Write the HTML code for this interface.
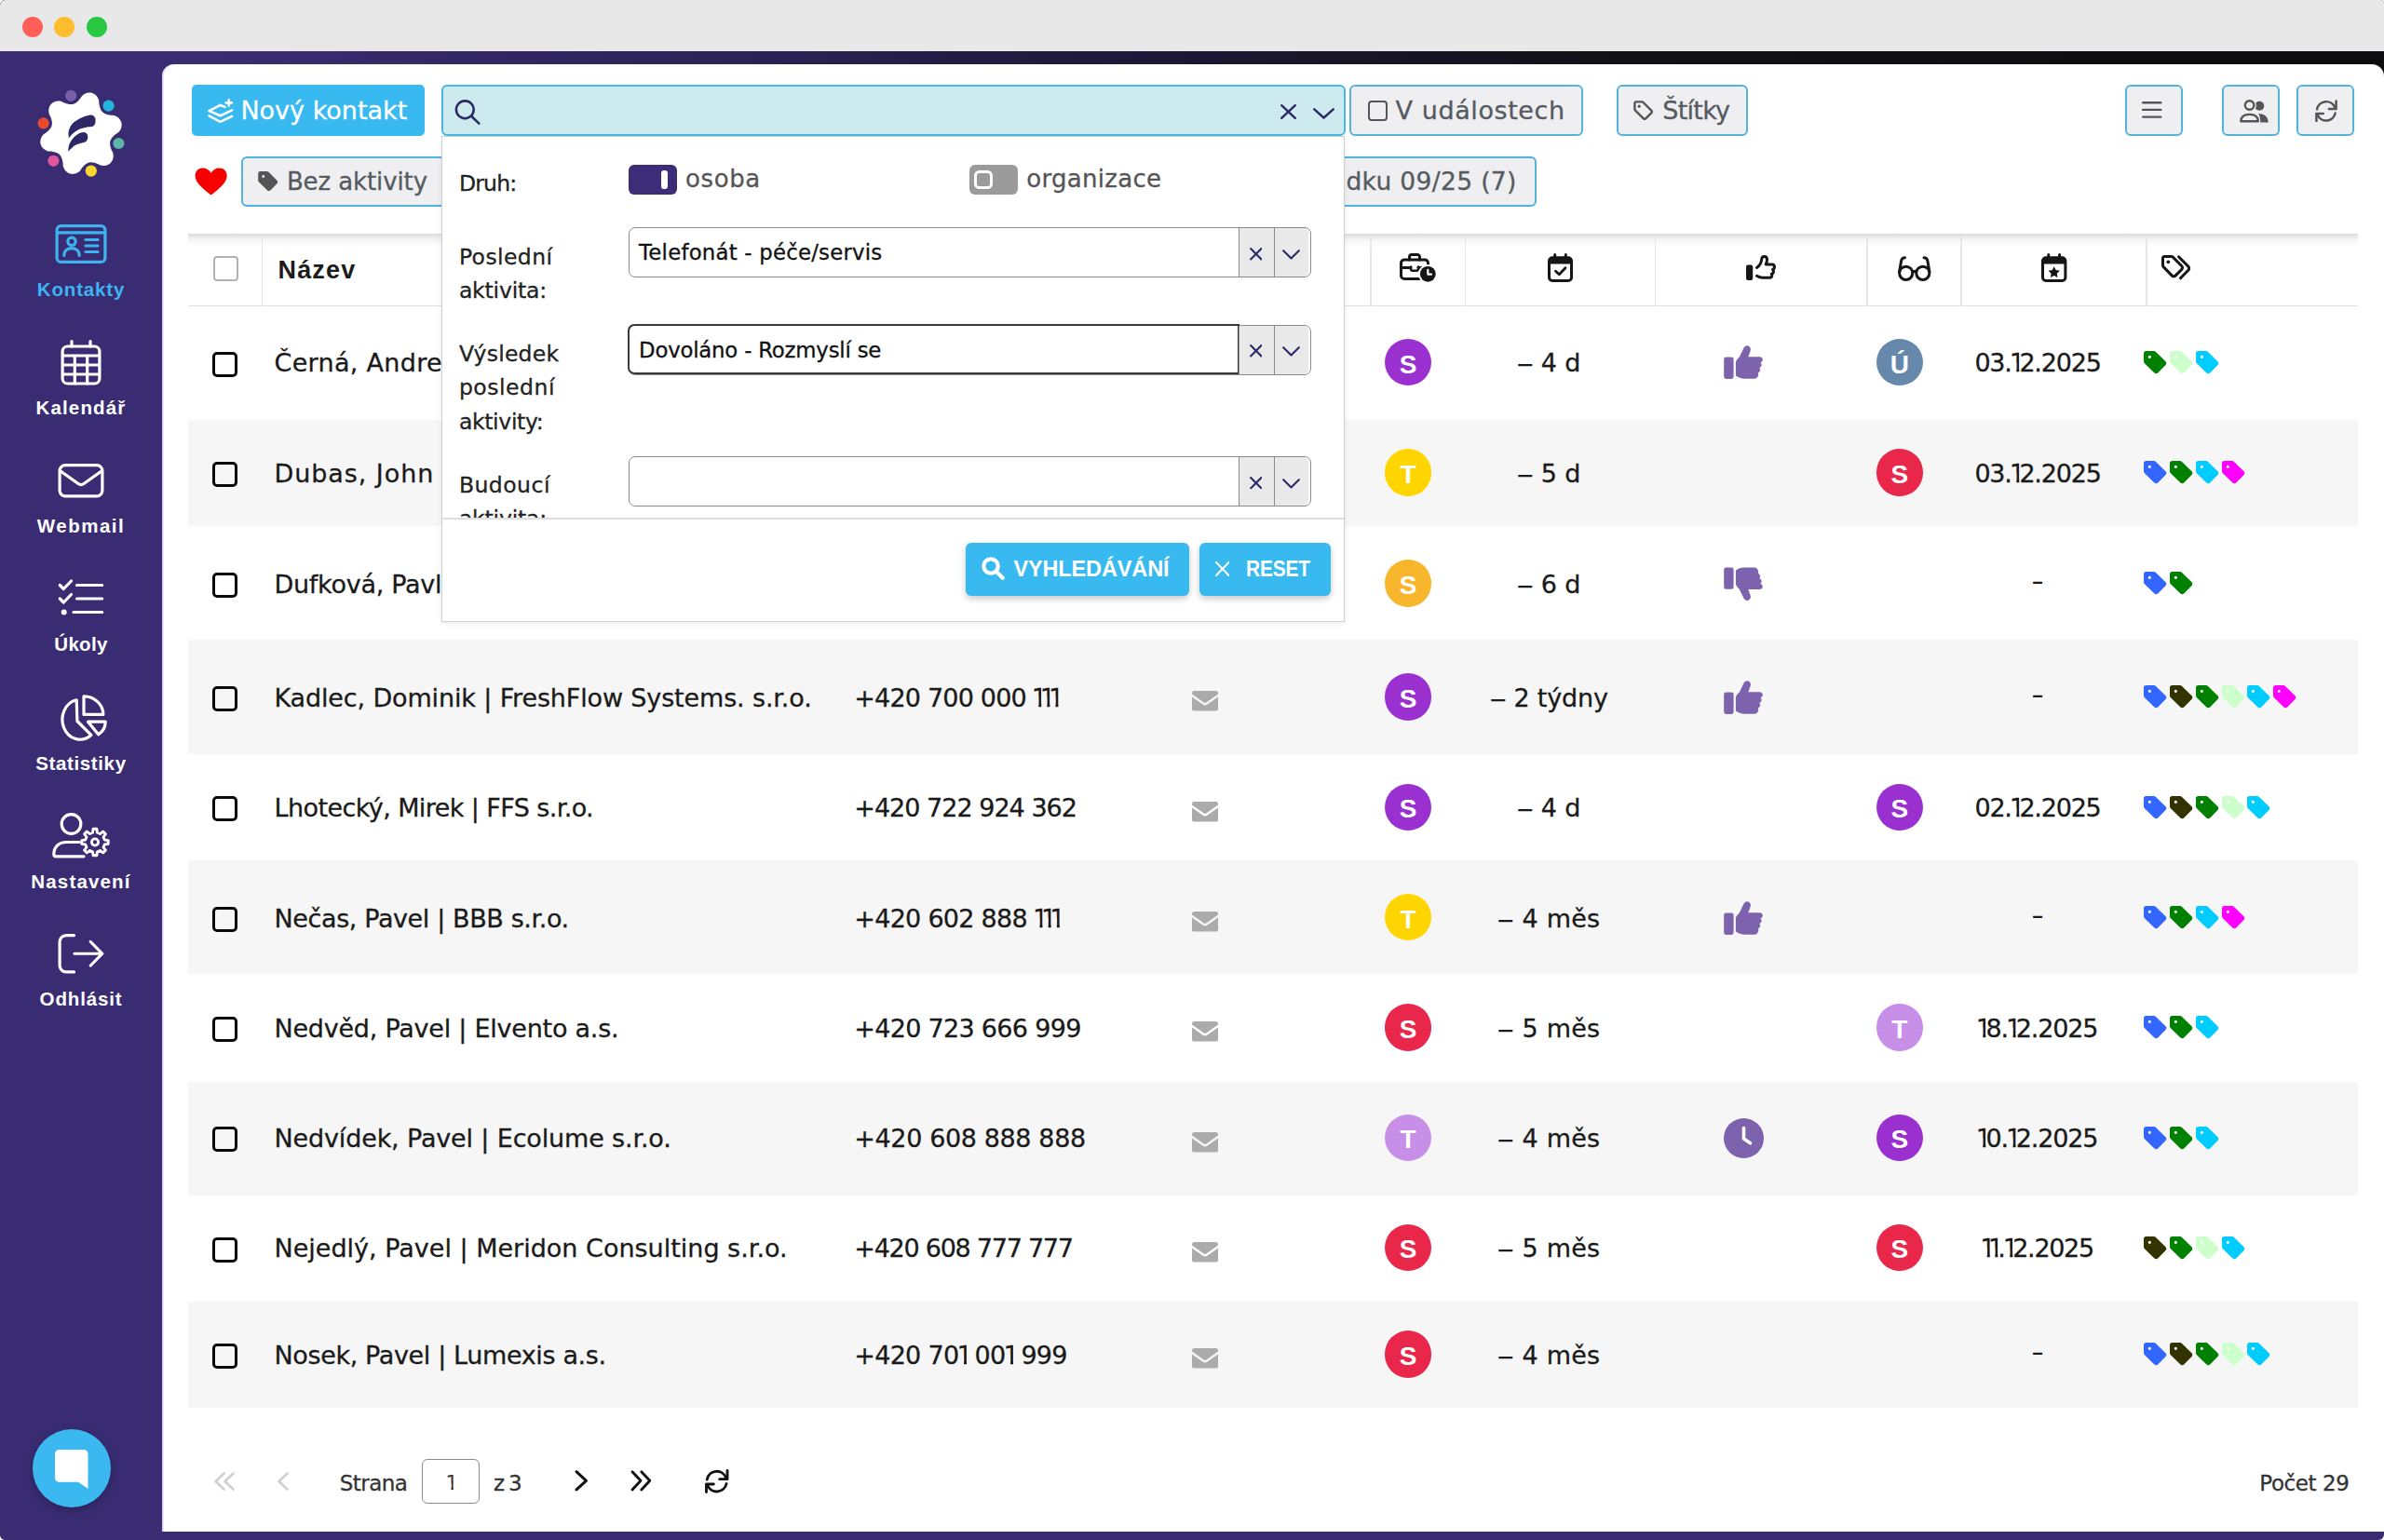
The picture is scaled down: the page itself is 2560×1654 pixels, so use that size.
<!DOCTYPE html>
<html lang="cs"><head><meta charset="utf-8"><title>Kontakty</title>
<style>
*{box-sizing:border-box;margin:0;padding:0}
html,body{width:2560px;height:1654px;overflow:hidden;background:#fff}
body{font-family:"DejaVu Sans","Liberation Sans",sans-serif;color:#1a1a1a;position:relative}
#win{position:absolute;left:0;top:0;width:2560px;height:1654px;border-radius:6px 4px 6px 6px;overflow:hidden;background:#3a2c73}
#titlebar{z-index:5;position:absolute;left:0;top:0;width:2560px;height:55.4px;background:#e8e8e8}
.tl{position:absolute;top:18.4px;width:22px;height:22px;border-radius:50%;display:block}
#strip{position:absolute;left:0;top:55.4px;width:2560px;height:34px;background:linear-gradient(90deg,#3a2c73 0,#3a2c73 9%,#2c2358 30%,#1b1733 50%,#111116 68%,#0d0d0f 100%)}
#sidebar{position:absolute;left:0;top:0;width:174px;height:1654px;background:#3a2c73}
#panel{position:absolute;left:174px;top:69.4px;width:2386px;height:1575.6px;background:#fff;border-radius:13px 13px 0 0;box-shadow:inset 1.6px 0 0 #d9d3f3}
#content{position:absolute;left:0;top:0;width:2560px;height:1654px}
#logo{position:absolute;left:36px;top:93px;width:100px;height:100px}
.nav{position:absolute;left:0;width:174px;height:100px;color:#fff;text-align:center}
.nav svg{position:absolute;left:50%;transform:translateX(-50%);top:0;overflow:visible}
.nav .lbl{position:absolute;left:0;width:174px;top:69.3px;font-family:"Liberation Sans","DejaVu Sans",sans-serif;font-weight:bold;line-height:1;white-space:nowrap}
.nav.active{color:#3db4f0}
#chat{position:absolute;left:34.8px;top:1535.3px;width:83.8px;height:83.8px;border-radius:50%;background:#3bb8f0;box-shadow:0 3px 10px rgba(0,0,0,.25)}
#chat svg{position:absolute;left:24px;top:21.3px}
.ic{position:absolute;line-height:0}
.ic svg{display:block;overflow:visible}
.t{position:absolute;white-space:nowrap;line-height:1;transform:translateY(-50%)}
.btn-primary{position:absolute;background:#38b9ef;border-radius:5px;color:#fff}
.btn-primary.sh{box-shadow:0 3px 7px rgba(0,0,0,.22);border-radius:6px}
.btn-primary svg{position:absolute}
.bt{position:absolute;top:calc(50% - .7px);transform:translateY(-50%);font-size:27px;line-height:1;white-space:nowrap;letter-spacing:-.2px}
.bb{position:absolute;top:50%;transform:translateY(-50%);font-family:"Liberation Sans","DejaVu Sans",sans-serif;font-weight:bold;font-size:23.5px;line-height:1;white-space:nowrap}
#search{position:absolute;left:474.2px;top:90.7px;width:970.4px;height:55.6px;background:#cdeaef;border:2px solid #45b8e6;border-radius:6px}
#search svg{position:absolute}
.chip{position:absolute;background:#efeff1;border:2.1px solid #52b3dc;border-radius:6px;color:#555b61;overflow:hidden}
.chip svg{position:absolute}
.ct{position:absolute;top:calc(50% - .2px);transform:translateY(-50%);font-size:28px;line-height:1;white-space:nowrap}
.sq{position:absolute;left:17.5px;top:15.5px;width:21.5px;height:21.5px;border:2.6px solid #555;border-radius:4px;display:block}
#thead{position:absolute;left:202px;top:251.3px;width:2330px;height:78.1px;border-bottom:1.2px solid #e0e0e0;background:linear-gradient(180deg,#dadada 0,#e6e6e6 2.5px,#f3f3f3 6px,#fbfbfb 10px,#fff 15px)}
.sep{position:absolute;top:253px;width:1.5px;height:76px;background:#e6e6e6}
.hcb{position:absolute;left:228.7px;top:275px;width:27px;height:27px;border:2px solid #b2b2b2;border-radius:4px;background:#fff}
.th{font-family:"Liberation Sans","DejaVu Sans",sans-serif;font-weight:bold;color:#1c1c1c}
.stripe{position:absolute;left:202px;width:2330px;background:#f6f6f6}
.cb{position:absolute;left:227.8px;width:27px;height:27px;border:3px solid #0a0a0a;border-radius:5px}
.name{left:294.5px}
.phone{left:917.3px}
.tm{left:1563.3px;width:200px;text-align:center}
.dt{left:2088px;width:200px;text-align:center}
.ds{transform:translateY(-50%) scaleX(1.4);-webkit-text-stroke:0 !important}
.n1{display:inline-block;clip-path:polygon(0 0,.39em 0,.39em 100%,.28em 100%,.28em 50%,0 50%);margin:0 -.2em 0 -.07em}
.av{position:absolute;width:50.5px;height:50.5px;border-radius:50%;color:#fff;text-align:center}
.av span{position:absolute;left:0;width:100%;top:calc(50% + 2.6px);transform:translateY(-50%);font-family:"Liberation Sans","DejaVu Sans",sans-serif;font-weight:bold;font-size:28px;line-height:1}
.pg{font-size:22.5px;color:#333}
.pgbox{position:absolute;left:452.6px;top:1567.3px;width:62.8px;height:48px;border:1.8px solid #8c8c8c;border-radius:6px;background:#fff}
.pgbox>span{position:absolute;left:0;width:100%;text-align:center;top:calc(50% + 2px);transform:translateY(-50%);font-size:22px;line-height:1;color:#333}
#dd{position:absolute;left:473.9px;top:146px;width:970.3px;height:521.5px;background:#fff;border:1.3px solid #cfcfcf;box-shadow:0 2px 6px rgba(0,0,0,.08)}
.dl{font-size:23.5px;line-height:36.3px;color:#222;transform:none}
.dv{font-size:26px;color:#555}
.tog{position:absolute;width:52px;height:31.4px;border-radius:6px}
.tog i{position:absolute;display:block}
.tog.on{background:#3b2d78}
.tog.on i{left:34.5px;top:5.4px;width:7.6px;height:20.6px;border-radius:3px;background:#fff}
.tog.off{background:#9b9b9b}
.tog.off i{left:5px;top:5.4px;width:20.6px;height:20.6px;border-radius:5.5px;border:3.2px solid #fff}
.sel{position:absolute;left:200.2px;width:732.5px;height:54px;border:1.6px solid #8a8a8a;border-radius:7px;background:#fff}
.sel.foc em{position:absolute;left:-1.6px;top:-1.6px;width:656.5px;height:54px;border:2.2px solid #3a3a3a;border-radius:7px 0 0 7px;display:block}
.sel span{position:absolute;left:10px;top:50%;transform:translateY(-50%);font-size:23.3px;line-height:1;white-space:nowrap;color:#111}
.sel b{position:absolute;top:0;height:100%;background:#e9e9e9;border-left:1.6px solid #8a8a8a;display:block}
.sel .sx{left:653.7px;width:38.2px}
.sel .sc{left:691.9px;width:37.4px;border-radius:0 5.4px 5.4px 0}
.sel b svg{position:absolute}
#ddclip{position:absolute;left:0;top:0;width:100%;height:409.2px;overflow:hidden}
#ddline{position:absolute;left:0;top:409.2px;width:100%;height:1.5px;background:#dedede}
.nd{display:inline-block;transform:scaleX(1.33);margin:0 1.9px}
.name,.phone,.tm,.dt,.dl,.dv,.pg,.ct,.bt,.sel span{-webkit-text-stroke:.3px currentColor}

</style></head>
<body>
<div id="win">
<div id="titlebar"><i class="tl" style="left:23.6px;background:#ff5f57"></i><i class="tl" style="left:58.4px;background:#febc2e"></i><i class="tl" style="left:93.2px;background:#28c840"></i></div>
<div id="strip"></div>
<div id="sidebar">
<div id="logo"><svg width="100" height="100" viewBox="0 0 100 100"><path d="M89.7 50.2L88.1 51.2L87.1 52.1L86.2 53.0L85.3 53.8L84.6 54.6L84.0 55.4L83.5 56.2L83.0 57.0L82.7 57.8L82.4 58.6L82.2 59.4L82.1 60.3L82.1 61.2L82.2 62.2L82.3 63.2L82.6 64.2L82.8 65.4L83.2 66.6L83.7 67.9L84.5 69.5L85.3 71.2L85.6 72.7L85.7 74.1L85.7 75.4L85.5 76.7L85.2 77.9L84.8 79.0L84.2 80.1L83.5 81.1L82.7 81.9L81.9 82.7L80.9 83.4L79.8 84.0L78.7 84.4L77.5 84.7L76.2 84.9L74.9 84.9L73.5 84.8L72.0 84.5L70.4 83.7L68.7 82.9L67.4 82.4L66.2 82.0L65.0 81.8L64.0 81.5L63.0 81.4L62.0 81.3L61.1 81.3L60.2 81.4L59.4 81.6L58.6 81.9L57.8 82.2L57.0 82.7L56.2 83.2L55.4 83.8L54.6 84.5L53.8 85.4L52.9 86.3L52.0 87.3L51.0 88.9L49.9 90.4L48.8 91.4L47.7 92.2L46.5 92.8L45.3 93.3L44.1 93.6L42.9 93.8L41.7 93.9L40.5 93.8L39.4 93.6L38.3 93.2L37.2 92.7L36.2 92.0L35.2 91.3L34.4 90.4L33.6 89.4L32.9 88.2L32.3 87.0L31.8 85.6L31.6 83.7L31.6 81.9L31.3 80.5L31.0 79.3L30.7 78.1L30.4 77.1L30.0 76.2L29.6 75.3L29.1 74.5L28.6 73.8L28.0 73.2L27.4 72.6L26.7 72.1L25.9 71.6L25.0 71.2L24.1 70.8L23.1 70.5L21.9 70.2L20.7 69.9L19.3 69.6L17.5 69.5L15.6 69.4L14.2 68.9L13.0 68.3L11.8 67.6L10.8 66.8L9.9 66.0L9.2 65.0L8.5 64.0L8.0 62.9L7.6 61.8L7.4 60.7L7.3 59.5L7.4 58.3L7.6 57.1L7.9 55.9L8.4 54.7L9.0 53.5L9.8 52.4L10.8 51.3L12.3 50.2L13.9 49.2L14.9 48.3L15.8 47.4L16.7 46.6L17.4 45.8L18.0 45.0L18.5 44.2L19.0 43.4L19.3 42.6L19.6 41.8L19.8 41.0L19.9 40.1L19.9 39.2L19.8 38.2L19.7 37.2L19.4 36.2L19.2 35.0L18.8 33.8L18.3 32.5L17.5 30.9L16.7 29.2L16.4 27.7L16.3 26.3L16.3 25.0L16.5 23.7L16.8 22.5L17.2 21.4L17.8 20.3L18.5 19.3L19.3 18.5L20.1 17.7L21.1 17.0L22.2 16.4L23.3 16.0L24.5 15.7L25.8 15.5L27.1 15.5L28.5 15.6L30.0 15.9L31.7 16.7L33.3 17.5L34.6 18.0L35.8 18.4L37.0 18.6L38.0 18.9L39.0 19.0L40.0 19.1L40.9 19.1L41.8 19.0L42.6 18.8L43.4 18.5L44.2 18.2L45.0 17.7L45.8 17.2L46.6 16.6L47.4 15.9L48.2 15.0L49.1 14.1L50.0 13.1L51.0 11.5L52.1 10.0L53.2 9.0L54.3 8.2L55.5 7.6L56.7 7.1L57.9 6.8L59.1 6.6L60.3 6.5L61.5 6.6L62.6 6.8L63.7 7.2L64.8 7.7L65.8 8.4L66.8 9.1L67.6 10.0L68.4 11.0L69.1 12.2L69.7 13.4L70.2 14.8L70.3 16.7L70.4 18.5L70.7 19.9L71.0 21.1L71.3 22.3L71.6 23.3L72.0 24.2L72.4 25.1L72.9 25.9L73.4 26.6L74.0 27.2L74.6 27.8L75.3 28.3L76.1 28.8L77.0 29.2L77.9 29.6L78.9 29.9L80.1 30.2L81.3 30.5L82.7 30.8L84.5 30.8L86.4 31.0L87.8 31.5L89.0 32.1L90.2 32.8L91.2 33.6L92.1 34.4L92.8 35.4L93.5 36.4L94.0 37.5L94.4 38.6L94.6 39.7L94.7 40.9L94.6 42.1L94.4 43.3L94.1 44.5L93.6 45.7L93.0 46.9L92.2 48.0L91.2 49.1Z" fill="#fff"/><circle cx="40.2" cy="9.8" r="8.6" fill="#3a2c73"/><circle cx="40.2" cy="9.8" r="6.1" fill="#7b5ea8"/><circle cx="80.6" cy="20.6" r="8.6" fill="#3a2c73"/><circle cx="80.6" cy="20.6" r="6.1" fill="#22b4dc"/><circle cx="91.4" cy="61.0" r="8.6" fill="#3a2c73"/><circle cx="91.4" cy="61.0" r="6.1" fill="#5bb5a8"/><circle cx="61.8" cy="90.6" r="8.6" fill="#3a2c73"/><circle cx="61.8" cy="90.6" r="6.1" fill="#f9d72f"/><circle cx="21.4" cy="79.8" r="8.6" fill="#3a2c73"/><circle cx="21.4" cy="79.8" r="6.1" fill="#e0559b"/><circle cx="10.6" cy="39.4" r="8.6" fill="#3a2c73"/><circle cx="10.6" cy="39.4" r="6.1" fill="#e84a2f"/><path d="M37.9 55.5C37.9 54.2 37.1 50.6 37.7 48.0C38.4 45.4 39.6 42.2 41.8 39.8C44.0 37.4 47.8 35.3 50.8 33.8C53.8 32.3 57.5 31.2 59.7 30.8C61.9 30.4 63.1 30.6 64.2 31.2C65.3 31.8 66.1 33.2 66.4 34.6C66.7 36.0 66.6 38.4 66.1 39.8C65.6 41.2 64.9 42.2 63.5 42.8C62.1 43.4 59.9 43.0 57.5 43.5C55.1 44.0 51.8 44.7 49.3 45.8C46.8 46.9 44.4 48.7 42.5 50.3C40.6 51.9 38.7 54.6 37.9 55.5Z" fill="#2d2766"/><path d="M37.2 69.7C37.4 68.6 37.3 65.2 38.1 62.9C38.9 60.6 40.2 58.2 41.8 56.2C43.4 54.2 45.8 52.2 47.8 51.0C49.8 49.8 52.1 49.1 53.7 49.1C55.3 49.1 56.8 49.9 57.5 51.0C58.2 52.1 58.5 54.1 58.2 55.5C58.0 56.9 57.2 58.3 56.0 59.2C54.8 60.1 52.7 60.1 50.8 60.7C48.9 61.3 46.5 61.9 44.8 62.9C43.0 63.9 41.6 65.6 40.3 66.7C39.0 67.8 37.7 69.2 37.2 69.7Z" fill="#2d2766"/></svg></div>
<div class="nav active" style="top:232px"><svg width="55" height="42" viewBox="0 0 55 42" style="top:8.5px"><g fill="none" stroke="currentColor" stroke-width="3.2" stroke-linecap="round" stroke-linejoin="round"><rect x="1.6" y="1.6" width="51.8" height="38.8" rx="4.5"/><path d="M2 8.8H53"/><circle cx="17.5" cy="18.3" r="4.2"/><path d="M9.3 33.5c0-5.2 3.6-7.8 8.2-7.8s8.2 2.6 8.2 7.8"/><path d="M32.5 16.5H45.5M32.5 23H45.5M32.5 29.5H45.5"/></g></svg><div class="lbl" style="font-size:20.5px;letter-spacing:0.85px">Kontakty</div></div>
<div class="nav" style="top:358.3px"><svg width="43" height="48.6" viewBox="0 0 43 48.6" style="top:6.5px"><g fill="none" stroke="currentColor" stroke-width="3.2" stroke-linecap="round" stroke-linejoin="round"><rect x="1.6" y="7" width="39.8" height="40" rx="5.5"/><path d="M11.5 1.6V7M31.5 1.6V7M2 17H41M2 27H41M2 37H41M14.8 17V47M28.2 17V47"/></g></svg><div class="lbl" style="font-size:20.5px;letter-spacing:1.16px">Kalendář</div></div>
<div class="nav" style="top:486px"><svg width="49" height="36.4" viewBox="0 0 49 36.4" style="top:11.9px"><g fill="none" stroke="currentColor" stroke-width="3.2" stroke-linecap="round" stroke-linejoin="round"><rect x="1.6" y="1.6" width="45.8" height="33.2" rx="6"/><path d="M2.5 8L21.5 21.5a5 5 0 0 0 6 0L46.5 8"/></g></svg><div class="lbl" style="font-size:20.5px;letter-spacing:1.51px">Webmail</div></div>
<div class="nav" style="top:612.5px"><svg width="49" height="40" viewBox="0 0 49 40" style="top:9.5px"><g fill="none" stroke="currentColor" stroke-width="3.2" stroke-linecap="round" stroke-linejoin="round"><path d="M1.8 6.5l4 4L14 2M1.8 21l4 4L14 16.5M20 6.5H47.2M20 21H47.2M16.5 35.5H47.2"/></g><circle cx="6.2" cy="35.5" r="3" fill="currentColor"/></svg><div class="lbl" style="font-size:20.5px;letter-spacing:0.33px">Úkoly</div></div>
<div class="nav" style="top:740.5px"><svg width="56" height="49.3" viewBox="0 0 56 49.3" style="top:5px"><g fill="none" stroke="currentColor" stroke-width="3.2" stroke-linecap="round" stroke-linejoin="round"><path d="M23.2 5.8A19 21.4 0 1 0 38.8 43.5L23.9 28.5Z"/><path d="M31 1.9V21.4H51.8A20.8 19.5 0 0 0 31 1.9Z"/><path d="M35.5 29.2H54.2C54.2 35 51 40 46.600 42.800Z"/></g></svg><div class="lbl" style="font-size:20.5px;letter-spacing:0.62px">Statistiky</div></div>
<div class="nav" style="top:867.7px"><svg width="62" height="48.5" viewBox="0 0 62 48.5" style="top:5.8px"><g fill="none" stroke="currentColor" stroke-width="3.2" stroke-linecap="round" stroke-linejoin="round"><circle cx="20.5" cy="12" r="10.3"/><path d="M29 31.5H15.5C7 31.5 1.8 37 1.8 44.5c0 1.5 .8 2.3 2.3 2.3H34"/><path d="M56.3 29.0L60.2 29.6L60.2 33.4L56.3 34.0L55.0 37.0L57.4 40.2L54.7 42.9L51.5 40.5L48.5 41.8L47.9 45.7L44.1 45.7L43.5 41.8L40.5 40.5L37.3 42.9L34.6 40.2L37.0 37.0L35.7 34.0L31.8 33.4L31.8 29.6L35.7 29.0L37.0 26.0L34.6 22.8L37.3 20.1L40.5 22.5L43.5 21.2L44.1 17.3L47.9 17.3L48.5 21.2L51.5 22.5L54.7 20.1L57.4 22.8L55.0 26.0Z" stroke-width="2.9"/><circle cx="46" cy="31.5" r="3.6" stroke-width="2.9"/></g></svg><div class="lbl" style="font-size:20.5px;letter-spacing:1.16px">Nastavení</div></div>
<div class="nav" style="top:994.2px"><svg width="49" height="42.5" viewBox="0 0 49 42.5" style="top:8.8px"><g fill="none" stroke="currentColor" stroke-width="3.2" stroke-linecap="round" stroke-linejoin="round"><path d="M17 1.6H8.6a7 7 0 0 0-7 7V33.9a7 7 0 0 0 7 7H17"/><path d="M17.5 21.25H47M34.8 8.5L47.3 21.25 34.8 34"/></g></svg><div class="lbl" style="font-size:20.5px;letter-spacing:0.85px">Odhlásit</div></div>
<div id="chat"><svg width="36" height="43" viewBox="0 0 36 43"><path d="M4.500 0H31a4.500 4.500 0 0 1 4.500 4.500V42.100L25 34.700H4.500A4.500 4.500 0 0 1 0 30.200V4.500A4.500 4.500 0 0 1 4.500 0Z" fill="#fff"/></svg></div>
</div>
<div id="panel">
</div>
<div id="content">
<!-- toolbar row 1 -->
<div class="btn-primary" style="left:205.5px;top:90.7px;width:250.5px;height:55.3px"><svg width="28" height="27" viewBox="0 0 28 27" style="left:17.5px;top:15.3px"><g fill="none" stroke="#fff" stroke-width="2.6" stroke-linecap="round" stroke-linejoin="round"><path d="M18.5 8.9L13.5 6.8 1.5 13.1l12 5.2 12.6-6"/><path d="M1.5 18.3l12 6.5 12.6-6"/><path d="M22.8 1.3v6.2M19.7 4.4h6.2"/></g></svg><span class="bt" style="left:52.9px;font-size:27px;letter-spacing:-0.00px">Nový kontakt</span></div>
<div id="search"><svg width="28" height="27" viewBox="0 0 28 27" style="left:11.8px;top:14.3px"><g fill="none" stroke="#2b2966" stroke-width="2.6" stroke-linecap="round"><circle cx="11.3" cy="10.8" r="9.4"/><path d="M18.2 17.7L26.3 25.6"/></g></svg><svg width="17" height="16" viewBox="0 0 17 16" style="left:898.6px;top:19.8px"><path d="M1.2 1.2L15.8 14.8M15.8 1.2L1.2 14.8" fill="none" stroke="#2b2966" stroke-width="2.4" stroke-linecap="round"/></svg><svg width="23" height="12" viewBox="0 0 23 12" style="left:933.5px;top:23.1px"><path d="M1.3 1.3L11.5 10.5 21.7 1.3" fill="none" stroke="#2b2966" stroke-width="2.4" stroke-linecap="round" stroke-linejoin="round"/></svg></div>
<div class="chip" style="left:1449.4px;top:90.7px;width:250.8px;height:55.3px"><i class="sq"></i><span class="ct" style="left:47.2px;top:calc(50% - .5px);font-size:27px;letter-spacing:0.58px">V událostech</span></div>
<div class="chip" style="left:1735.5px;top:90.7px;width:141.8px;height:55.3px"><svg width="21" height="21" viewBox="0 0 21 21" style="left:16.5px;top:15.8px"><path d="M1.4 2.6A1.2 1.2 0 0 1 2.6 1.4H9.2a2 2 0 0 1 1.4.6l8.6 8.6a2 2 0 0 1 0 2.8l-5.8 5.8a2 2 0 0 1-2.8 0L2 10.6a2 2 0 0 1-.6-1.4Z" fill="none" stroke="#555" stroke-width="2.4" stroke-linejoin="round"/><circle cx="6.2" cy="6.2" r="1.6" fill="#555"/></svg><span class="ct" style="left:47.8px;top:calc(50% - .5px);font-size:27px;letter-spacing:-0.74px">Štítky</span></div>
<div class="chip" style="left:2281.6px;top:90.7px;width:62px;height:55.3px"><svg width="21.5" height="18" viewBox="0 0 21.5 18" style="left:16.8px;top:16.8px"><path d="M1.2 1.2H20.3M1.2 8.9H20.3M1.2 16.6H20.3" stroke="#555" stroke-width="2.4" stroke-linecap="round" fill="none"/></svg></div>
<div class="chip" style="left:2386px;top:90.7px;width:62.3px;height:55.3px"><svg width="33" height="27" viewBox="0 0 33 27" style="left:16.400px;top:13.200px"><path d="M21.200 16.100C27.500 16.100 31.700 19.600 31.700 25.500H22.800C23 21.500 22.800 18.600 21.200 16.100Z" fill="#555"/><circle cx="22.300" cy="7.700" r="5" fill="#555"/><circle cx="11.600" cy="7" r="7.300" fill="#efeff1"/><path d="M2.400 24.300C2.400 19.300 6 16.900 11.600 16.900S20.800 19.300 20.800 24.300Z" fill="#efeff1" stroke="#efeff1" stroke-width="5" stroke-linejoin="round"/><circle cx="11.600" cy="7" r="4.800" fill="none" stroke="#555" stroke-width="2.400"/><path d="M2.400 24.300C2.400 19.300 6 16.900 11.600 16.900S20.800 19.300 20.800 24.300Z" fill="none" stroke="#555" stroke-width="2.400" stroke-linejoin="round"/></svg></div>
<div class="chip" style="left:2466.2px;top:90.7px;width:62px;height:55.3px"><svg width="24" height="24.4" viewBox="0 0 24 24.4" style="left:17.500px;top:13.900px"><g fill="none" stroke="#555" stroke-width="2.5" stroke-linecap="round" stroke-linejoin="round"><path d="M2.100 10.400A10 10 0 0 1 21.300 8.600"/><path d="M21.700 14.600A10 10 0 0 1 2.700 16.400"/><path d="M22.600 1.400V10H14.800"/><path d="M1.400 23.100V15H8.800"/></g></svg></div>
<!-- toolbar row 2 -->
<div class="ic" style="left:208.5px;top:180px"><svg width="35.3" height="30" viewBox="0 0 35.3 30"><path d="M17.65 29.6C11 24 1 17.5 .6 9.3.4 4 4.2.6 8.9.6c3.6 0 6.9 2 8.75 5.2C19.5 2.6 22.8.6 26.4.6c4.7 0 8.5 3.4 8.3 8.7-.4 8.2-10.4 14.7-17.05 20.3Z" fill="#f70000"/></svg></div>
<div class="chip" style="left:259px;top:167.6px;width:260px;height:54.8px"><svg width="21.4" height="21" viewBox="0 0 24 24" style="left:16.200px;top:14.800px"><path d="M0 2.600A2.600 2.600 0 0 1 2.600 0H10.800a3 3 0 0 1 2.100.900L23.100 11a3 3 0 0 1 0 4.200L15.300 23.100a3 3 0 0 1-4.200 0L.900 13.100A3 3 0 0 1 0 11ZM6.300 7.900a1.600 1.600 0 1 0 0-3.200 1.600 1.600 0 0 0 0 3.200Z" fill="#555" fill-rule="evenodd"/></svg><span class="ct" style="left:46.9px;font-size:26px;letter-spacing:-0.11px">Bez aktivity</span></div>
<div class="chip" style="left:1100px;top:167.6px;width:550px;height:54.8px"><span class="ct" style="right:19.3px;font-size:27.5px"><span style="margin-right:7px">řá</span><span style="font-size:26.5px;letter-spacing:0.34px">dku 09/25 (7)</span></span></div>
<!-- table -->
<div id="thead"></div>
<div class="sep" style="left:280.55px"></div><div class="sep" style="left:1471.45px"></div><div class="sep" style="left:1572.65px"></div><div class="sep" style="left:1776.85px"></div><div class="sep" style="left:2004.45px"></div><div class="sep" style="left:2105.45px"></div><div class="sep" style="left:2304.15px"></div>
<div class="hcb"></div>
<div class="t th" style="left:298.5px;top:289.5px;font-size:27px;letter-spacing:1.17px">Název</div>
<div class="ic" style="left:1503px;top:272px"><svg width="39" height="31" viewBox="0 0 39 31"><g fill="none" stroke="#161616" stroke-width="3" stroke-linecap="round" stroke-linejoin="round"><path d="M24 27.5H5a3.5 3.5 0 0 1-3.5-3.5V10.5A3.5 3.5 0 0 1 5 7H27a3.5 3.5 0 0 1 3.5 3.5V14"/><path d="M10.5 7V4a2.5 2.5 0 0 1 2.5-2.5h6A2.5 2.5 0 0 1 21.500 4V7"/><path d="M1.8 15.5H12M20 15.5H24"/><path d="M12 14.5v2.3a2 2 0 0 0 2 2h4a2 2 0 0 0 2-2V14.500" stroke-width="2.4"/></g><circle cx="30.3" cy="22.3" r="10.400" fill="#fff"/><circle cx="30.3" cy="22.3" r="8.400" fill="#161616"/><path d="M30.3 17.8V22.6H34" fill="none" stroke="#fff" stroke-width="2.2" stroke-linecap="round" stroke-linejoin="round"/></svg></div>
<div class="ic" style="left:1662px;top:272px"><svg width="27" height="31" viewBox="0 0 27 31"><g fill="none" stroke="#161616" stroke-width="3" stroke-linecap="round" stroke-linejoin="round"><rect x="1.5" y="4.8" width="24" height="24.7" rx="3.5"/><path d="M7.700 1.500V6M19.300 1.500V6"/><path d="M8.500 19.200l3.800 3.600 6.700-7" stroke-width="2.8"/></g><path d="M1.500 8.500A3.700 3.700 0 0 1 5.200 4.800H21.800A3.700 3.700 0 0 1 25.500 8.500V11.500H1.500Z" fill="#161616"/></svg></div>
<div class="ic" style="left:1875px;top:274px"><svg width="32" height="27.5" viewBox="0 0 32 27.5"><rect x="0" y="10.5" width="7.2" height="16.5" rx="2" fill="#161616"/><g fill="none" stroke="#161616" stroke-width="3" stroke-linecap="round" stroke-linejoin="round"><path d="M11.500 13.500c3.200-2.200 5-5.500 5.300-9.300.1-1.600 1.200-2.700 2.700-2.700 1.800 0 3 1.400 3 3.300 0 1.800-.5 3.600-1.300 5.200h6.300c1.700 0 3 1.200 3 2.800 0 1.300-.8 2.300-2 2.700.7.500 1 1.300 1 2.100 0 1.300-.9 2.400-2.200 2.600.3.400.5 1 .5 1.500 0 1.500-1.200 2.600-2.700 2.600H18c-2.500 0-4.500-.7-6.500-2"/></g></svg></div>
<div class="ic" style="left:2038px;top:274.5px"><svg width="35.5" height="27" viewBox="0 0 35.5 27"><g fill="none" stroke="#161616" stroke-width="3" stroke-linecap="round" stroke-linejoin="round"><path d="M7.500 1.700C5 1.700 4 3 3.600 5.200L1.600 17"/><path d="M28 1.700c2.500 0 3.500 1.300 3.900 3.500L33.900 17"/><circle cx="8.700" cy="18.300" r="7.100"/><circle cx="26.800" cy="18.300" r="7.100"/><path d="M15.800 16.500h3.900"/></g></svg></div>
<div class="ic" style="left:2192px;top:272px"><svg width="27.4" height="31" viewBox="0 0 27.4 31"><g fill="none" stroke="#161616" stroke-width="3" stroke-linecap="round" stroke-linejoin="round"><rect x="1.5" y="4.8" width="24.4" height="24.7" rx="3.5"/><path d="M7.800 1.500V6M19.600 1.500V6"/></g><path d="M1.500 8.500A3.700 3.700 0 0 1 5.200 4.800H22.200A3.700 3.700 0 0 1 25.900 8.500V11.500H1.500Z" fill="#161616"/><path d="M13.700 14.200l1.900 3.900 4.300.6-3.100 3 .7 4.300-3.800-2-3.800 2 .7-4.300-3.100-3 4.300-.6Z" fill="#161616"/></svg></div>
<div class="ic" style="left:2321px;top:273.5px"><svg width="32" height="27.5" viewBox="0 0 32 27.5"><g fill="none" stroke="#161616" stroke-width="3" stroke-linecap="round" stroke-linejoin="round" stroke-width="2.800"><path d="M1.500 3A1.500 1.500 0 0 1 3 1.500H10.500a2.500 2.500 0 0 1 1.800.7l9.500 9.500a2.500 2.500 0 0 1 0 3.600l-6.800 6.800a2.500 2.500 0 0 1-3.600 0L2.200 12.600a2.500 2.500 0 0 1-.7-1.800Z"/><path d="M18.500 1.800l10.300 10.300a3 3 0 0 1 0 4.200L20.500 24.800"/></g><circle cx="7.300" cy="7.300" r="1.900" fill="#161616"/></svg></div>
<div class="cb" style="top:377.7px"></div>
<div class="t name" style="top:389.4px;font-size:27px;letter-spacing:0.31px">Černá, Andrea</div>
<div class="av" style="left:1486.8px;top:363.8px;background:#9b30d0"><span>S</span></div>
<div class="t tm" style="top:389.4px;font-size:27px;letter-spacing:-0.15px"><span class="nd">–</span> 4 d</div>
<div class="ic" style="left:1850.7px;top:371.4px"><svg width="42.2" height="36.3" viewBox="0 0 42.2 36.3"><g fill="#7d62ae"><rect x=".2" y="12.5" width="10.4" height="23.4" rx="2.3"/><path d="M12.9 18.8C12.9 16.200 14.600 14.700 16.800 12.600L21 3.700C22 1.200 24.300 -.200 26.300 .500C28.700 1.300 29.400 3.800 28.600 6L26.300 12.300H38.500C40.800 12.300 41.900 14 41.800 15.400C41.700 17 40.600 18.200 39.100 18.400C40.300 19 40.700 20.200 40.600 21.300C40.400 22.800 39.400 23.800 38.100 24C39 24.600 39.300 25.700 39.100 26.700C38.800 28.100 37.900 29 36.700 29.200C37.300 29.900 37.400 30.800 37.200 31.700C36.700 34.200 35 35.800 32.500 35.800H23C18.500 35.800 15.500 34.600 12.900 32.600Z"/></g></svg></div>
<div class="av" style="left:2014.6px;top:363.8px;background:#6688aa"><span>Ú</span></div>
<div class="t dt" style="top:389.4px;font-size:27px;letter-spacing:-1.21px">03.<span class="n1">1</span>2.2025</div>
<div class="ic" style="left:2301.9px;top:376.8px"><svg width="24.2" height="24.2" viewBox="0 0 24 24"><path d="M0 2.600A2.600 2.600 0 0 1 2.600 0H10.800a3 3 0 0 1 2.100.900L23.100 11a3 3 0 0 1 0 4.200L15.300 23.100a3 3 0 0 1-4.200 0L.900 13.100A3 3 0 0 1 0 11ZM6.300 7.900a1.600 1.600 0 1 0 0-3.200 1.600 1.600 0 0 0 0 3.200Z" fill="#008000" fill-rule="evenodd"/></svg></div>
<div class="ic" style="left:2329.8px;top:376.8px"><svg width="24.2" height="24.2" viewBox="0 0 24 24"><path d="M0 2.600A2.600 2.600 0 0 1 2.600 0H10.800a3 3 0 0 1 2.100.900L23.100 11a3 3 0 0 1 0 4.200L15.300 23.100a3 3 0 0 1-4.200 0L.900 13.100A3 3 0 0 1 0 11ZM6.300 7.900a1.600 1.600 0 1 0 0-3.200 1.600 1.600 0 0 0 0 3.200Z" fill="#ccffcc" fill-rule="evenodd"/></svg></div>
<div class="ic" style="left:2357.6px;top:376.8px"><svg width="24.2" height="24.2" viewBox="0 0 24 24"><path d="M0 2.600A2.600 2.600 0 0 1 2.600 0H10.800a3 3 0 0 1 2.100.900L23.100 11a3 3 0 0 1 0 4.200L15.300 23.100a3 3 0 0 1-4.200 0L.900 13.100A3 3 0 0 1 0 11ZM6.300 7.900a1.600 1.600 0 1 0 0-3.200 1.600 1.600 0 0 0 0 3.200Z" fill="#00ccff" fill-rule="evenodd"/></svg></div>
<div class="stripe" style="top:451.2px;height:113.9px"></div>
<div class="cb" style="top:496.0px"></div>
<div class="t name" style="top:507.7px;font-size:27px;letter-spacing:0.93px">Dubas, John</div>
<div class="av" style="left:1486.8px;top:482.1px;background:#ffd500"><span>T</span></div>
<div class="t tm" style="top:507.7px;font-size:27px;letter-spacing:-0.15px"><span class="nd">–</span> 5 d</div>
<div class="av" style="left:2014.6px;top:482.1px;background:#e8274b"><span>S</span></div>
<div class="t dt" style="top:507.7px;font-size:27px;letter-spacing:-1.21px">03.<span class="n1">1</span>2.2025</div>
<div class="ic" style="left:2301.9px;top:495.1px"><svg width="24.2" height="24.2" viewBox="0 0 24 24"><path d="M0 2.600A2.600 2.600 0 0 1 2.600 0H10.800a3 3 0 0 1 2.100.900L23.100 11a3 3 0 0 1 0 4.200L15.300 23.100a3 3 0 0 1-4.200 0L.900 13.100A3 3 0 0 1 0 11ZM6.300 7.900a1.600 1.600 0 1 0 0-3.200 1.600 1.600 0 0 0 0 3.200Z" fill="#3366ff" fill-rule="evenodd"/></svg></div>
<div class="ic" style="left:2329.8px;top:495.1px"><svg width="24.2" height="24.2" viewBox="0 0 24 24"><path d="M0 2.600A2.600 2.600 0 0 1 2.600 0H10.800a3 3 0 0 1 2.100.900L23.100 11a3 3 0 0 1 0 4.200L15.300 23.100a3 3 0 0 1-4.200 0L.900 13.100A3 3 0 0 1 0 11ZM6.300 7.900a1.600 1.600 0 1 0 0-3.200 1.600 1.600 0 0 0 0 3.200Z" fill="#008000" fill-rule="evenodd"/></svg></div>
<div class="ic" style="left:2357.6px;top:495.1px"><svg width="24.2" height="24.2" viewBox="0 0 24 24"><path d="M0 2.600A2.600 2.600 0 0 1 2.600 0H10.800a3 3 0 0 1 2.100.900L23.100 11a3 3 0 0 1 0 4.200L15.300 23.100a3 3 0 0 1-4.200 0L.900 13.100A3 3 0 0 1 0 11ZM6.300 7.900a1.600 1.600 0 1 0 0-3.200 1.600 1.600 0 0 0 0 3.200Z" fill="#00ccff" fill-rule="evenodd"/></svg></div>
<div class="ic" style="left:2385.5px;top:495.1px"><svg width="24.2" height="24.2" viewBox="0 0 24 24"><path d="M0 2.600A2.600 2.600 0 0 1 2.600 0H10.800a3 3 0 0 1 2.100.900L23.100 11a3 3 0 0 1 0 4.200L15.300 23.100a3 3 0 0 1-4.200 0L.900 13.100A3 3 0 0 1 0 11ZM6.300 7.900a1.600 1.600 0 1 0 0-3.200 1.600 1.600 0 0 0 0 3.200Z" fill="#ff00ff" fill-rule="evenodd"/></svg></div>
<div class="cb" style="top:615.1px"></div>
<div class="t name" style="top:626.8px;font-size:27px;letter-spacing:-0.28px">Dufková, Pavla</div>
<div class="av" style="left:1486.8px;top:601.2px;background:#f8b62d"><span>S</span></div>
<div class="t tm" style="top:626.8px;font-size:27px;letter-spacing:-0.15px"><span class="nd">–</span> 6 d</div>
<div class="ic" style="left:1850.7px;top:608.8px"><svg width="42.2" height="36.3" viewBox="0 0 42.2 36.3"><g fill="#7d62ae" transform="translate(0 36.300) scale(1 -1)"><rect x=".2" y="12.5" width="10.4" height="23.4" rx="2.3"/><path d="M12.9 18.8C12.9 16.200 14.600 14.700 16.800 12.600L21 3.700C22 1.200 24.300 -.200 26.300 .500C28.700 1.300 29.400 3.800 28.600 6L26.300 12.300H38.500C40.800 12.300 41.900 14 41.800 15.400C41.700 17 40.600 18.200 39.100 18.400C40.300 19 40.700 20.200 40.600 21.300C40.400 22.800 39.400 23.800 38.100 24C39 24.600 39.300 25.700 39.100 26.700C38.800 28.100 37.900 29 36.700 29.200C37.300 29.900 37.400 30.800 37.200 31.700C36.700 34.200 35 35.800 32.500 35.800H23C18.500 35.800 15.500 34.600 12.900 32.600Z"/></g></svg></div>
<div class="t dt ds" style="top:623.4px;font-size:27px">-</div>
<div class="ic" style="left:2301.9px;top:614.2px"><svg width="24.2" height="24.2" viewBox="0 0 24 24"><path d="M0 2.600A2.600 2.600 0 0 1 2.600 0H10.800a3 3 0 0 1 2.100.900L23.100 11a3 3 0 0 1 0 4.200L15.300 23.100a3 3 0 0 1-4.200 0L.900 13.100A3 3 0 0 1 0 11ZM6.300 7.900a1.600 1.600 0 1 0 0-3.200 1.600 1.600 0 0 0 0 3.200Z" fill="#3366ff" fill-rule="evenodd"/></svg></div>
<div class="ic" style="left:2329.8px;top:614.2px"><svg width="24.2" height="24.2" viewBox="0 0 24 24"><path d="M0 2.600A2.600 2.600 0 0 1 2.600 0H10.800a3 3 0 0 1 2.100.900L23.100 11a3 3 0 0 1 0 4.200L15.300 23.100a3 3 0 0 1-4.200 0L.900 13.100A3 3 0 0 1 0 11ZM6.300 7.900a1.600 1.600 0 1 0 0-3.200 1.600 1.600 0 0 0 0 3.200Z" fill="#008000" fill-rule="evenodd"/></svg></div>
<div class="stripe" style="top:686.9px;height:123.3px"></div>
<div class="cb" style="top:736.9px"></div>
<div class="t name" style="top:748.6px;font-size:27px;letter-spacing:-0.14px">Kadlec, Dominik | FreshFlow Systems. s.r.o.</div>
<div class="t phone" style="top:748.6px;font-size:27px;letter-spacing:-0.82px">+420 700 000 <span class="n1">1</span><span class="n1">1</span><span class="n1">1</span></div>
<div class="ic" style="left:1280px;top:742.0px"><svg width="28" height="21.6" viewBox="0 0 28 21.6"><path d="M2.600 0H25.400A2.600 2.600 0 0 1 28 2.600V3.400L15.300 12.600a2.200 2.200 0 0 1-2.600 0L0 3.400V2.600A2.600 2.600 0 0 1 2.600 0ZM0 6.400V19A2.600 2.600 0 0 0 2.600 21.600H25.400A2.600 2.600 0 0 0 28 19V6.400L16.600 14.600a4.400 4.400 0 0 1-5.200 0Z" fill="#ababab"/></svg></div>
<div class="av" style="left:1486.8px;top:723.0px;background:#9b30d0"><span>S</span></div>
<div class="t tm" style="top:748.6px;font-size:27px;letter-spacing:-0.17px"><span class="nd">–</span> 2 týdny</div>
<div class="ic" style="left:1850.7px;top:730.6px"><svg width="42.2" height="36.3" viewBox="0 0 42.2 36.3"><g fill="#7d62ae"><rect x=".2" y="12.5" width="10.4" height="23.4" rx="2.3"/><path d="M12.9 18.8C12.9 16.200 14.600 14.700 16.800 12.600L21 3.700C22 1.200 24.300 -.200 26.300 .500C28.700 1.300 29.400 3.800 28.600 6L26.300 12.300H38.500C40.800 12.300 41.900 14 41.800 15.400C41.700 17 40.600 18.200 39.100 18.400C40.300 19 40.700 20.200 40.600 21.300C40.400 22.800 39.400 23.800 38.100 24C39 24.600 39.300 25.700 39.100 26.700C38.800 28.100 37.900 29 36.700 29.200C37.300 29.900 37.400 30.800 37.200 31.700C36.700 34.200 35 35.800 32.500 35.800H23C18.500 35.800 15.500 34.600 12.900 32.600Z"/></g></svg></div>
<div class="t dt ds" style="top:745.2px;font-size:27px">-</div>
<div class="ic" style="left:2301.9px;top:736.0px"><svg width="24.2" height="24.2" viewBox="0 0 24 24"><path d="M0 2.600A2.600 2.600 0 0 1 2.600 0H10.800a3 3 0 0 1 2.100.900L23.100 11a3 3 0 0 1 0 4.200L15.300 23.100a3 3 0 0 1-4.200 0L.900 13.100A3 3 0 0 1 0 11ZM6.300 7.900a1.600 1.600 0 1 0 0-3.200 1.600 1.600 0 0 0 0 3.200Z" fill="#3366ff" fill-rule="evenodd"/></svg></div>
<div class="ic" style="left:2329.8px;top:736.0px"><svg width="24.2" height="24.2" viewBox="0 0 24 24"><path d="M0 2.600A2.600 2.600 0 0 1 2.600 0H10.800a3 3 0 0 1 2.100.900L23.100 11a3 3 0 0 1 0 4.200L15.300 23.100a3 3 0 0 1-4.200 0L.900 13.100A3 3 0 0 1 0 11ZM6.300 7.900a1.600 1.600 0 1 0 0-3.200 1.600 1.600 0 0 0 0 3.200Z" fill="#333300" fill-rule="evenodd"/></svg></div>
<div class="ic" style="left:2357.6px;top:736.0px"><svg width="24.2" height="24.2" viewBox="0 0 24 24"><path d="M0 2.600A2.600 2.600 0 0 1 2.600 0H10.800a3 3 0 0 1 2.100.900L23.100 11a3 3 0 0 1 0 4.200L15.300 23.100a3 3 0 0 1-4.200 0L.900 13.100A3 3 0 0 1 0 11ZM6.300 7.900a1.600 1.600 0 1 0 0-3.200 1.600 1.600 0 0 0 0 3.200Z" fill="#008000" fill-rule="evenodd"/></svg></div>
<div class="ic" style="left:2385.5px;top:736.0px"><svg width="24.2" height="24.2" viewBox="0 0 24 24"><path d="M0 2.600A2.600 2.600 0 0 1 2.600 0H10.800a3 3 0 0 1 2.100.900L23.100 11a3 3 0 0 1 0 4.200L15.300 23.100a3 3 0 0 1-4.200 0L.900 13.100A3 3 0 0 1 0 11ZM6.300 7.900a1.600 1.600 0 1 0 0-3.200 1.600 1.600 0 0 0 0 3.200Z" fill="#ccffcc" fill-rule="evenodd"/></svg></div>
<div class="ic" style="left:2413.3px;top:736.0px"><svg width="24.2" height="24.2" viewBox="0 0 24 24"><path d="M0 2.600A2.600 2.600 0 0 1 2.600 0H10.800a3 3 0 0 1 2.100.900L23.100 11a3 3 0 0 1 0 4.200L15.300 23.100a3 3 0 0 1-4.200 0L.900 13.100A3 3 0 0 1 0 11ZM6.300 7.900a1.600 1.600 0 1 0 0-3.200 1.600 1.600 0 0 0 0 3.200Z" fill="#00ccff" fill-rule="evenodd"/></svg></div>
<div class="ic" style="left:2441.2px;top:736.0px"><svg width="24.2" height="24.2" viewBox="0 0 24 24"><path d="M0 2.600A2.600 2.600 0 0 1 2.600 0H10.800a3 3 0 0 1 2.100.900L23.100 11a3 3 0 0 1 0 4.200L15.300 23.100a3 3 0 0 1-4.200 0L.900 13.100A3 3 0 0 1 0 11ZM6.300 7.900a1.600 1.600 0 1 0 0-3.200 1.600 1.600 0 0 0 0 3.200Z" fill="#ff00ff" fill-rule="evenodd"/></svg></div>
<div class="cb" style="top:855.4px"></div>
<div class="t name" style="top:867.1px;font-size:27px;letter-spacing:-0.59px">Lhotecký, Mirek | FFS s.r.o.</div>
<div class="t phone" style="top:867.1px;font-size:27px;letter-spacing:-0.99px">+420 722 924 362</div>
<div class="ic" style="left:1280px;top:860.5px"><svg width="28" height="21.6" viewBox="0 0 28 21.6"><path d="M2.600 0H25.400A2.600 2.600 0 0 1 28 2.600V3.400L15.300 12.600a2.200 2.200 0 0 1-2.600 0L0 3.400V2.600A2.600 2.600 0 0 1 2.600 0ZM0 6.400V19A2.600 2.600 0 0 0 2.600 21.600H25.400A2.600 2.600 0 0 0 28 19V6.400L16.600 14.600a4.400 4.400 0 0 1-5.200 0Z" fill="#ababab"/></svg></div>
<div class="av" style="left:1486.8px;top:841.5px;background:#9b30d0"><span>S</span></div>
<div class="t tm" style="top:867.1px;font-size:27px;letter-spacing:-0.15px"><span class="nd">–</span> 4 d</div>
<div class="av" style="left:2014.6px;top:841.5px;background:#9b30d0"><span>S</span></div>
<div class="t dt" style="top:867.1px;font-size:27px;letter-spacing:-1.22px">02.<span class="n1">1</span>2.2025</div>
<div class="ic" style="left:2301.9px;top:854.5px"><svg width="24.2" height="24.2" viewBox="0 0 24 24"><path d="M0 2.600A2.600 2.600 0 0 1 2.600 0H10.800a3 3 0 0 1 2.100.900L23.100 11a3 3 0 0 1 0 4.200L15.300 23.100a3 3 0 0 1-4.200 0L.900 13.100A3 3 0 0 1 0 11ZM6.300 7.900a1.600 1.600 0 1 0 0-3.200 1.600 1.600 0 0 0 0 3.200Z" fill="#3366ff" fill-rule="evenodd"/></svg></div>
<div class="ic" style="left:2329.8px;top:854.5px"><svg width="24.2" height="24.2" viewBox="0 0 24 24"><path d="M0 2.600A2.600 2.600 0 0 1 2.600 0H10.800a3 3 0 0 1 2.100.900L23.100 11a3 3 0 0 1 0 4.200L15.300 23.100a3 3 0 0 1-4.200 0L.900 13.100A3 3 0 0 1 0 11ZM6.300 7.900a1.600 1.600 0 1 0 0-3.200 1.600 1.600 0 0 0 0 3.200Z" fill="#333300" fill-rule="evenodd"/></svg></div>
<div class="ic" style="left:2357.6px;top:854.5px"><svg width="24.2" height="24.2" viewBox="0 0 24 24"><path d="M0 2.600A2.600 2.600 0 0 1 2.600 0H10.800a3 3 0 0 1 2.100.900L23.100 11a3 3 0 0 1 0 4.200L15.300 23.100a3 3 0 0 1-4.200 0L.900 13.100A3 3 0 0 1 0 11ZM6.300 7.900a1.600 1.600 0 1 0 0-3.200 1.600 1.600 0 0 0 0 3.200Z" fill="#008000" fill-rule="evenodd"/></svg></div>
<div class="ic" style="left:2385.5px;top:854.5px"><svg width="24.2" height="24.2" viewBox="0 0 24 24"><path d="M0 2.600A2.600 2.600 0 0 1 2.600 0H10.800a3 3 0 0 1 2.100.900L23.100 11a3 3 0 0 1 0 4.200L15.300 23.100a3 3 0 0 1-4.200 0L.900 13.100A3 3 0 0 1 0 11ZM6.300 7.900a1.600 1.600 0 1 0 0-3.200 1.600 1.600 0 0 0 0 3.200Z" fill="#ccffcc" fill-rule="evenodd"/></svg></div>
<div class="ic" style="left:2413.3px;top:854.5px"><svg width="24.2" height="24.2" viewBox="0 0 24 24"><path d="M0 2.600A2.600 2.600 0 0 1 2.600 0H10.800a3 3 0 0 1 2.100.900L23.100 11a3 3 0 0 1 0 4.200L15.300 23.100a3 3 0 0 1-4.200 0L.900 13.100A3 3 0 0 1 0 11ZM6.300 7.900a1.600 1.600 0 1 0 0-3.200 1.600 1.600 0 0 0 0 3.200Z" fill="#00ccff" fill-rule="evenodd"/></svg></div>
<div class="stripe" style="top:923.8px;height:122.1px"></div>
<div class="cb" style="top:973.8px"></div>
<div class="t name" style="top:985.5px;font-size:27px;letter-spacing:-0.39px">Nečas, Pavel | BBB s.r.o.</div>
<div class="t phone" style="top:985.5px;font-size:27px;letter-spacing:-0.73px">+420 602 888 <span class="n1">1</span><span class="n1">1</span><span class="n1">1</span></div>
<div class="ic" style="left:1280px;top:978.9px"><svg width="28" height="21.6" viewBox="0 0 28 21.6"><path d="M2.600 0H25.400A2.600 2.600 0 0 1 28 2.600V3.400L15.300 12.600a2.200 2.200 0 0 1-2.600 0L0 3.400V2.600A2.600 2.600 0 0 1 2.600 0ZM0 6.400V19A2.600 2.600 0 0 0 2.600 21.600H25.400A2.600 2.600 0 0 0 28 19V6.400L16.600 14.600a4.400 4.400 0 0 1-5.200 0Z" fill="#ababab"/></svg></div>
<div class="av" style="left:1486.8px;top:959.9px;background:#ffd500"><span>T</span></div>
<div class="t tm" style="top:985.5px;font-size:27px;letter-spacing:0.17px"><span class="nd">–</span> 4 měs</div>
<div class="ic" style="left:1850.7px;top:967.5px"><svg width="42.2" height="36.3" viewBox="0 0 42.2 36.3"><g fill="#7d62ae"><rect x=".2" y="12.5" width="10.4" height="23.4" rx="2.3"/><path d="M12.9 18.8C12.9 16.200 14.600 14.700 16.800 12.600L21 3.700C22 1.200 24.300 -.200 26.300 .500C28.700 1.300 29.400 3.800 28.600 6L26.300 12.300H38.500C40.800 12.300 41.900 14 41.800 15.400C41.700 17 40.600 18.200 39.100 18.400C40.300 19 40.700 20.200 40.600 21.300C40.400 22.800 39.400 23.800 38.100 24C39 24.600 39.300 25.700 39.100 26.700C38.800 28.100 37.900 29 36.700 29.200C37.300 29.900 37.400 30.800 37.200 31.700C36.700 34.200 35 35.800 32.500 35.800H23C18.500 35.800 15.500 34.600 12.900 32.600Z"/></g></svg></div>
<div class="t dt ds" style="top:982.1px;font-size:27px">-</div>
<div class="ic" style="left:2301.9px;top:972.9px"><svg width="24.2" height="24.2" viewBox="0 0 24 24"><path d="M0 2.600A2.600 2.600 0 0 1 2.600 0H10.800a3 3 0 0 1 2.100.900L23.100 11a3 3 0 0 1 0 4.200L15.300 23.100a3 3 0 0 1-4.200 0L.900 13.100A3 3 0 0 1 0 11ZM6.300 7.900a1.600 1.600 0 1 0 0-3.200 1.600 1.600 0 0 0 0 3.200Z" fill="#3366ff" fill-rule="evenodd"/></svg></div>
<div class="ic" style="left:2329.8px;top:972.9px"><svg width="24.2" height="24.2" viewBox="0 0 24 24"><path d="M0 2.600A2.600 2.600 0 0 1 2.600 0H10.800a3 3 0 0 1 2.100.900L23.100 11a3 3 0 0 1 0 4.200L15.300 23.100a3 3 0 0 1-4.200 0L.900 13.100A3 3 0 0 1 0 11ZM6.300 7.900a1.600 1.600 0 1 0 0-3.200 1.600 1.600 0 0 0 0 3.200Z" fill="#008000" fill-rule="evenodd"/></svg></div>
<div class="ic" style="left:2357.6px;top:972.9px"><svg width="24.2" height="24.2" viewBox="0 0 24 24"><path d="M0 2.600A2.600 2.600 0 0 1 2.600 0H10.800a3 3 0 0 1 2.100.900L23.100 11a3 3 0 0 1 0 4.200L15.300 23.100a3 3 0 0 1-4.200 0L.900 13.100A3 3 0 0 1 0 11ZM6.300 7.900a1.600 1.600 0 1 0 0-3.200 1.600 1.600 0 0 0 0 3.200Z" fill="#00ccff" fill-rule="evenodd"/></svg></div>
<div class="ic" style="left:2385.5px;top:972.9px"><svg width="24.2" height="24.2" viewBox="0 0 24 24"><path d="M0 2.600A2.600 2.600 0 0 1 2.600 0H10.800a3 3 0 0 1 2.100.900L23.100 11a3 3 0 0 1 0 4.200L15.300 23.100a3 3 0 0 1-4.200 0L.900 13.100A3 3 0 0 1 0 11ZM6.300 7.900a1.600 1.600 0 1 0 0-3.200 1.600 1.600 0 0 0 0 3.200Z" fill="#ff00ff" fill-rule="evenodd"/></svg></div>
<div class="cb" style="top:1091.9px"></div>
<div class="t name" style="top:1103.6px;font-size:27px;letter-spacing:-0.24px">Nedvěd, Pavel | Elvento a.s.</div>
<div class="t phone" style="top:1103.6px;font-size:27px;letter-spacing:-0.70px">+420 723 666 999</div>
<div class="ic" style="left:1280px;top:1097.0px"><svg width="28" height="21.6" viewBox="0 0 28 21.6"><path d="M2.600 0H25.400A2.600 2.600 0 0 1 28 2.600V3.400L15.300 12.600a2.200 2.200 0 0 1-2.600 0L0 3.400V2.600A2.600 2.600 0 0 1 2.600 0ZM0 6.400V19A2.600 2.600 0 0 0 2.600 21.600H25.400A2.600 2.600 0 0 0 28 19V6.400L16.600 14.600a4.400 4.400 0 0 1-5.200 0Z" fill="#ababab"/></svg></div>
<div class="av" style="left:1486.8px;top:1078.0px;background:#e8274b"><span>S</span></div>
<div class="t tm" style="top:1103.6px;font-size:27px;letter-spacing:0.17px"><span class="nd">–</span> 5 měs</div>
<div class="av" style="left:2014.6px;top:1078.0px;background:#c88fe8"><span>T</span></div>
<div class="t dt" style="top:1103.6px;font-size:27px;letter-spacing:-1.14px"><span class="n1">1</span>8.<span class="n1">1</span>2.2025</div>
<div class="ic" style="left:2301.9px;top:1091.0px"><svg width="24.2" height="24.2" viewBox="0 0 24 24"><path d="M0 2.600A2.600 2.600 0 0 1 2.600 0H10.800a3 3 0 0 1 2.100.900L23.100 11a3 3 0 0 1 0 4.200L15.300 23.100a3 3 0 0 1-4.200 0L.900 13.100A3 3 0 0 1 0 11ZM6.300 7.900a1.600 1.600 0 1 0 0-3.200 1.600 1.600 0 0 0 0 3.200Z" fill="#3366ff" fill-rule="evenodd"/></svg></div>
<div class="ic" style="left:2329.8px;top:1091.0px"><svg width="24.2" height="24.2" viewBox="0 0 24 24"><path d="M0 2.600A2.600 2.600 0 0 1 2.600 0H10.800a3 3 0 0 1 2.100.900L23.100 11a3 3 0 0 1 0 4.200L15.300 23.100a3 3 0 0 1-4.200 0L.900 13.100A3 3 0 0 1 0 11ZM6.300 7.900a1.600 1.600 0 1 0 0-3.200 1.600 1.600 0 0 0 0 3.200Z" fill="#008000" fill-rule="evenodd"/></svg></div>
<div class="ic" style="left:2357.6px;top:1091.0px"><svg width="24.2" height="24.2" viewBox="0 0 24 24"><path d="M0 2.600A2.600 2.600 0 0 1 2.600 0H10.800a3 3 0 0 1 2.100.900L23.100 11a3 3 0 0 1 0 4.200L15.300 23.100a3 3 0 0 1-4.200 0L.900 13.100A3 3 0 0 1 0 11ZM6.300 7.900a1.600 1.600 0 1 0 0-3.200 1.600 1.600 0 0 0 0 3.200Z" fill="#00ccff" fill-rule="evenodd"/></svg></div>
<div class="stripe" style="top:1162.1px;height:121.5px"></div>
<div class="cb" style="top:1210.4px"></div>
<div class="t name" style="top:1222.1px;font-size:27px;letter-spacing:-0.15px">Nedvídek, Pavel | Ecolume s.r.o.</div>
<div class="t phone" style="top:1222.1px;font-size:27px;letter-spacing:-0.38px">+420 608 888 888</div>
<div class="ic" style="left:1280px;top:1215.5px"><svg width="28" height="21.6" viewBox="0 0 28 21.6"><path d="M2.600 0H25.400A2.600 2.600 0 0 1 28 2.600V3.400L15.300 12.600a2.200 2.200 0 0 1-2.600 0L0 3.400V2.600A2.600 2.600 0 0 1 2.600 0ZM0 6.400V19A2.600 2.600 0 0 0 2.600 21.600H25.400A2.600 2.600 0 0 0 28 19V6.400L16.600 14.600a4.400 4.400 0 0 1-5.200 0Z" fill="#ababab"/></svg></div>
<div class="av" style="left:1486.8px;top:1196.5px;background:#c88fe8"><span>T</span></div>
<div class="t tm" style="top:1222.1px;font-size:27px;letter-spacing:0.17px"><span class="nd">–</span> 4 měs</div>
<div class="ic" style="left:1850.7px;top:1201.0px"><svg width="43" height="43" viewBox="0 0 43 43"><circle cx="21.500" cy="21.500" r="21.500" fill="#7d62ae"/><path d="M21.500 10.500V22l7 4.700" fill="none" stroke="#fff" stroke-width="3.600" stroke-linecap="round" stroke-linejoin="round"/></svg></div>
<div class="av" style="left:2014.6px;top:1196.5px;background:#9b30d0"><span>S</span></div>
<div class="t dt" style="top:1222.1px;font-size:27px;letter-spacing:-1.14px"><span class="n1">1</span>0.<span class="n1">1</span>2.2025</div>
<div class="ic" style="left:2301.9px;top:1209.5px"><svg width="24.2" height="24.2" viewBox="0 0 24 24"><path d="M0 2.600A2.600 2.600 0 0 1 2.600 0H10.800a3 3 0 0 1 2.100.900L23.100 11a3 3 0 0 1 0 4.200L15.300 23.100a3 3 0 0 1-4.200 0L.900 13.100A3 3 0 0 1 0 11ZM6.300 7.900a1.600 1.600 0 1 0 0-3.200 1.600 1.600 0 0 0 0 3.200Z" fill="#3366ff" fill-rule="evenodd"/></svg></div>
<div class="ic" style="left:2329.8px;top:1209.5px"><svg width="24.2" height="24.2" viewBox="0 0 24 24"><path d="M0 2.600A2.600 2.600 0 0 1 2.600 0H10.800a3 3 0 0 1 2.100.900L23.100 11a3 3 0 0 1 0 4.200L15.300 23.100a3 3 0 0 1-4.200 0L.900 13.100A3 3 0 0 1 0 11ZM6.300 7.900a1.600 1.600 0 1 0 0-3.200 1.600 1.600 0 0 0 0 3.200Z" fill="#008000" fill-rule="evenodd"/></svg></div>
<div class="ic" style="left:2357.6px;top:1209.5px"><svg width="24.2" height="24.2" viewBox="0 0 24 24"><path d="M0 2.600A2.600 2.600 0 0 1 2.600 0H10.800a3 3 0 0 1 2.100.900L23.100 11a3 3 0 0 1 0 4.200L15.300 23.100a3 3 0 0 1-4.200 0L.900 13.100A3 3 0 0 1 0 11ZM6.300 7.900a1.600 1.600 0 1 0 0-3.200 1.600 1.600 0 0 0 0 3.200Z" fill="#00ccff" fill-rule="evenodd"/></svg></div>
<div class="cb" style="top:1328.5px"></div>
<div class="t name" style="top:1340.2px;font-size:27px;letter-spacing:-0.00px">Nejedlý, Pavel | Meridon Consulting s.r.o.</div>
<div class="t phone" style="top:1340.2px;font-size:27px;letter-spacing:-1.26px">+420 608 777 777</div>
<div class="ic" style="left:1280px;top:1333.6px"><svg width="28" height="21.6" viewBox="0 0 28 21.6"><path d="M2.600 0H25.400A2.600 2.600 0 0 1 28 2.600V3.400L15.300 12.600a2.200 2.200 0 0 1-2.600 0L0 3.400V2.600A2.600 2.600 0 0 1 2.600 0ZM0 6.400V19A2.600 2.600 0 0 0 2.600 21.600H25.400A2.600 2.600 0 0 0 28 19V6.400L16.600 14.600a4.400 4.400 0 0 1-5.200 0Z" fill="#ababab"/></svg></div>
<div class="av" style="left:1486.8px;top:1314.6px;background:#e8274b"><span>S</span></div>
<div class="t tm" style="top:1340.2px;font-size:27px;letter-spacing:0.17px"><span class="nd">–</span> 5 měs</div>
<div class="av" style="left:2014.6px;top:1314.6px;background:#e8274b"><span>S</span></div>
<div class="t dt" style="top:1340.2px;font-size:27px;letter-spacing:-1.31px"><span class="n1">1</span><span class="n1">1</span>.<span class="n1">1</span>2.2025</div>
<div class="ic" style="left:2301.9px;top:1327.6px"><svg width="24.2" height="24.2" viewBox="0 0 24 24"><path d="M0 2.600A2.600 2.600 0 0 1 2.600 0H10.800a3 3 0 0 1 2.100.900L23.100 11a3 3 0 0 1 0 4.200L15.300 23.100a3 3 0 0 1-4.200 0L.900 13.100A3 3 0 0 1 0 11ZM6.300 7.900a1.600 1.600 0 1 0 0-3.200 1.600 1.600 0 0 0 0 3.200Z" fill="#333300" fill-rule="evenodd"/></svg></div>
<div class="ic" style="left:2329.8px;top:1327.6px"><svg width="24.2" height="24.2" viewBox="0 0 24 24"><path d="M0 2.600A2.600 2.600 0 0 1 2.600 0H10.800a3 3 0 0 1 2.100.900L23.100 11a3 3 0 0 1 0 4.200L15.300 23.100a3 3 0 0 1-4.200 0L.900 13.100A3 3 0 0 1 0 11ZM6.300 7.900a1.600 1.600 0 1 0 0-3.200 1.600 1.600 0 0 0 0 3.200Z" fill="#008000" fill-rule="evenodd"/></svg></div>
<div class="ic" style="left:2357.6px;top:1327.6px"><svg width="24.2" height="24.2" viewBox="0 0 24 24"><path d="M0 2.600A2.600 2.600 0 0 1 2.600 0H10.800a3 3 0 0 1 2.100.900L23.100 11a3 3 0 0 1 0 4.200L15.300 23.100a3 3 0 0 1-4.200 0L.900 13.100A3 3 0 0 1 0 11ZM6.300 7.900a1.600 1.600 0 1 0 0-3.200 1.600 1.600 0 0 0 0 3.200Z" fill="#ccffcc" fill-rule="evenodd"/></svg></div>
<div class="ic" style="left:2385.5px;top:1327.6px"><svg width="24.2" height="24.2" viewBox="0 0 24 24"><path d="M0 2.600A2.600 2.600 0 0 1 2.600 0H10.800a3 3 0 0 1 2.100.900L23.100 11a3 3 0 0 1 0 4.200L15.300 23.100a3 3 0 0 1-4.200 0L.900 13.100A3 3 0 0 1 0 11ZM6.300 7.900a1.600 1.600 0 1 0 0-3.200 1.600 1.600 0 0 0 0 3.200Z" fill="#00ccff" fill-rule="evenodd"/></svg></div>
<div class="stripe" style="top:1397.7px;height:114.3px"></div>
<div class="cb" style="top:1442.9px"></div>
<div class="t name" style="top:1454.6px;font-size:27px;letter-spacing:-0.37px">Nosek, Pavel | Lumexis a.s.</div>
<div class="t phone" style="top:1454.6px;font-size:27px;letter-spacing:-0.72px">+420 70<span class="n1">1</span> 00<span class="n1">1</span> 999</div>
<div class="ic" style="left:1280px;top:1448.0px"><svg width="28" height="21.6" viewBox="0 0 28 21.6"><path d="M2.600 0H25.400A2.600 2.600 0 0 1 28 2.600V3.400L15.300 12.600a2.200 2.200 0 0 1-2.600 0L0 3.400V2.600A2.600 2.600 0 0 1 2.600 0ZM0 6.400V19A2.600 2.600 0 0 0 2.600 21.600H25.400A2.600 2.600 0 0 0 28 19V6.400L16.600 14.600a4.400 4.400 0 0 1-5.200 0Z" fill="#ababab"/></svg></div>
<div class="av" style="left:1486.8px;top:1429.0px;background:#e8274b"><span>S</span></div>
<div class="t tm" style="top:1454.6px;font-size:27px;letter-spacing:0.17px"><span class="nd">–</span> 4 měs</div>
<div class="t dt ds" style="top:1451.2px;font-size:27px">-</div>
<div class="ic" style="left:2301.9px;top:1442.0px"><svg width="24.2" height="24.2" viewBox="0 0 24 24"><path d="M0 2.600A2.600 2.600 0 0 1 2.600 0H10.800a3 3 0 0 1 2.100.900L23.100 11a3 3 0 0 1 0 4.200L15.300 23.100a3 3 0 0 1-4.200 0L.900 13.100A3 3 0 0 1 0 11ZM6.300 7.900a1.600 1.600 0 1 0 0-3.200 1.600 1.600 0 0 0 0 3.200Z" fill="#3366ff" fill-rule="evenodd"/></svg></div>
<div class="ic" style="left:2329.8px;top:1442.0px"><svg width="24.2" height="24.2" viewBox="0 0 24 24"><path d="M0 2.600A2.600 2.600 0 0 1 2.600 0H10.800a3 3 0 0 1 2.100.900L23.100 11a3 3 0 0 1 0 4.200L15.300 23.100a3 3 0 0 1-4.200 0L.900 13.100A3 3 0 0 1 0 11ZM6.300 7.900a1.600 1.600 0 1 0 0-3.200 1.600 1.600 0 0 0 0 3.200Z" fill="#333300" fill-rule="evenodd"/></svg></div>
<div class="ic" style="left:2357.6px;top:1442.0px"><svg width="24.2" height="24.2" viewBox="0 0 24 24"><path d="M0 2.600A2.600 2.600 0 0 1 2.600 0H10.800a3 3 0 0 1 2.100.900L23.100 11a3 3 0 0 1 0 4.200L15.300 23.100a3 3 0 0 1-4.200 0L.900 13.100A3 3 0 0 1 0 11ZM6.300 7.900a1.600 1.600 0 1 0 0-3.200 1.600 1.600 0 0 0 0 3.200Z" fill="#008000" fill-rule="evenodd"/></svg></div>
<div class="ic" style="left:2385.5px;top:1442.0px"><svg width="24.2" height="24.2" viewBox="0 0 24 24"><path d="M0 2.600A2.600 2.600 0 0 1 2.600 0H10.800a3 3 0 0 1 2.100.900L23.100 11a3 3 0 0 1 0 4.200L15.300 23.100a3 3 0 0 1-4.200 0L.900 13.100A3 3 0 0 1 0 11ZM6.300 7.900a1.600 1.600 0 1 0 0-3.200 1.600 1.600 0 0 0 0 3.200Z" fill="#ccffcc" fill-rule="evenodd"/></svg></div>
<div class="ic" style="left:2413.3px;top:1442.0px"><svg width="24.2" height="24.2" viewBox="0 0 24 24"><path d="M0 2.600A2.600 2.600 0 0 1 2.600 0H10.800a3 3 0 0 1 2.100.900L23.100 11a3 3 0 0 1 0 4.200L15.300 23.100a3 3 0 0 1-4.200 0L.900 13.100A3 3 0 0 1 0 11ZM6.300 7.900a1.600 1.600 0 1 0 0-3.200 1.600 1.600 0 0 0 0 3.200Z" fill="#00ccff" fill-rule="evenodd"/></svg></div>
<!-- pager -->
<div class="ic" style="left:229.5px;top:1580.5px"><svg width="22" height="20" viewBox="0 0 22 20"><path d="M10.500 1.500L1.500 10 10.500 18.500M20.500 1.500L11.500 10 20.500 18.500" fill="none" stroke="#d0d0d0" stroke-width="2.6" stroke-linecap="round" stroke-linejoin="round"/></svg></div>
<div class="ic" style="left:297.5px;top:1580.5px"><svg width="12.5" height="20" viewBox="0 0 12.5 20"><path d="M10.500 1.500L1.500 10 10.500 18.500" fill="none" stroke="#d0d0d0" stroke-width="2.6" stroke-linecap="round" stroke-linejoin="round"/></svg></div>
<div class="t pg" style="left:364.8px;top:1592.5px;font-size:23px;letter-spacing:-0.56px">Strana</div>
<div class="pgbox"><span><span class="n1" style="margin:0 -.12em 0 0">1</span></span></div>
<div class="t pg" style="left:530px;top:1592.5px;font-size:23px;letter-spacing:-1.71px">z 3</div>
<div class="ic" style="left:616.5px;top:1579px"><svg width="14.5" height="22.6" viewBox="0 0 14.5 22.6"><path d="M2 1.700L12.500 11.300 2 20.900" fill="none" stroke="#111" stroke-width="3" stroke-linecap="round" stroke-linejoin="round"/></svg></div>
<div class="ic" style="left:677px;top:1579px"><svg width="22.5" height="22.6" viewBox="0 0 22.5 22.6"><path d="M2 1.700L11 11.300 2 20.900M11.800 1.700L20.800 11.300 11.800 20.900" fill="none" stroke="#111" stroke-width="2.9" stroke-linecap="round" stroke-linejoin="round"/></svg></div>
<div class="ic" style="left:756.5px;top:1577.5px"><svg width="25.5" height="26" viewBox="0 0 24 24.4"><g fill="none" stroke="#111" stroke-width="2.7" stroke-linecap="round" stroke-linejoin="round"><path d="M2.100 10.400A10 10 0 0 1 21.300 8.600"/><path d="M21.700 14.600A10 10 0 0 1 2.700 16.400"/><path d="M22.600 1.400V10H14.800"/><path d="M1.400 23.100V15H8.800"/></g></svg></div>
<div class="t pg" style="left:2426.3px;top:1592.5px;font-size:23px;letter-spacing:-0.43px">Počet 29</div>
<!-- dropdown -->
<div id="dd">
<div class="t dl" style="left:18px;top:32px"><span style="font-size:23.5px;letter-spacing:-0.79px">Druh:</span></div>
<div class="tog on" style="left:200.2px;top:30.3px"><i></i></div><div class="t dv" style="left:261.2px;top:44.6px;font-size:26px;letter-spacing:0.60px">osoba</div>
<div class="tog off" style="left:565.7px;top:30.3px"><i></i></div><div class="t dv" style="left:627.4px;top:44.6px;font-size:26px;letter-spacing:0.29px">organizace</div>
<div class="t dl" style="left:18px;top:110.6px"><span style="font-size:23.5px;letter-spacing:0.40px">Poslední</span><br><span style="font-size:23.5px;letter-spacing:-0.17px">aktivita:</span></div>
<div class="sel" style="top:97.2px"><span style="font-size:22.8px;letter-spacing:0.22px">Telefonát - péče/servis</span><b class="sx"><svg width="13.5" height="13.5" viewBox="0 0 13.5 13.5" style="left:10.8px;top:20.9px"><path d="M1.100 1.100L12.400 12.400M12.400 1.100L1.100 12.400" fill="none" stroke="#2b2966" stroke-width="2.100" stroke-linecap="round"/></svg></b><b class="sc"><svg width="19" height="11" viewBox="0 0 19 11" style="left:7.7px;top:22.9px"><path d="M1.200 1.200L9.500 9.400 17.800 1.200" fill="none" stroke="#2b2966" stroke-width="2.100" stroke-linecap="round" stroke-linejoin="round"/></svg></b></div>
<div class="t dl" style="left:18px;top:215.1px"><span style="font-size:23.5px;letter-spacing:0.23px">Výsledek</span><br><span style="font-size:23.5px;letter-spacing:0.54px">poslední</span><br><span style="font-size:23.5px;letter-spacing:-0.33px">aktivity:</span></div>
<div class="sel foc" style="top:201.5px"><em></em><span style="font-size:22.8px;letter-spacing:-0.20px">Dovoláno - Rozmyslí se</span><b class="sx"><svg width="13.5" height="13.5" viewBox="0 0 13.5 13.5" style="left:10.8px;top:20.9px"><path d="M1.100 1.100L12.400 12.400M12.400 1.100L1.100 12.400" fill="none" stroke="#2b2966" stroke-width="2.100" stroke-linecap="round"/></svg></b><b class="sc"><svg width="19" height="11" viewBox="0 0 19 11" style="left:7.7px;top:22.9px"><path d="M1.200 1.200L9.500 9.400 17.800 1.200" fill="none" stroke="#2b2966" stroke-width="2.100" stroke-linecap="round" stroke-linejoin="round"/></svg></b></div>
<div id="ddclip"><div class="t dl" style="left:18px;top:355.7px"><span style="font-size:23.5px;letter-spacing:0.48px">Budoucí</span><br><span style="font-size:23.5px;letter-spacing:-0.17px">aktivita:</span></div></div>
<div class="sel" style="top:342.7px"><span></span><b class="sx"><svg width="13.5" height="13.5" viewBox="0 0 13.5 13.5" style="left:10.8px;top:20.9px"><path d="M1.100 1.100L12.400 12.400M12.400 1.100L1.100 12.400" fill="none" stroke="#2b2966" stroke-width="2.100" stroke-linecap="round"/></svg></b><b class="sc"><svg width="19" height="11" viewBox="0 0 19 11" style="left:7.7px;top:22.9px"><path d="M1.200 1.200L9.500 9.400 17.800 1.200" fill="none" stroke="#2b2966" stroke-width="2.100" stroke-linecap="round" stroke-linejoin="round"/></svg></b></div>
<div id="ddline"></div>
<div class="btn-primary sh" style="left:561.9px;top:435.8px;width:240.3px;height:57.7px"><svg width="25" height="25" viewBox="0 0 25 25" style="left:16.8px;top:15.600px"><g fill="none" stroke="#fff" stroke-width="4.200" stroke-linecap="round"><circle cx="10" cy="10" r="7.700"/><path d="M16 16L22.700 22.700"/></g></svg><span class="bb" style="left:51.6px;font-size:23.5px;letter-spacing:-0.13px">VYHLEDÁVÁNÍ</span></div>
<div class="btn-primary sh" style="left:813px;top:435.8px;width:141px;height:57.7px"><svg width="15.5" height="16" viewBox="0 0 15.5 16" style="left:16.800px;top:20.500px"><path d="M1 1L14.500 15M14.500 1L1 15" fill="none" stroke="#fff" stroke-width="2" stroke-linecap="round"/></svg><span class="bb" style="left:50px;transform:translateY(-50%) scaleX(.89);transform-origin:0 50%;font-size:23.5px;letter-spacing:-0.19px">RESET</span></div>
</div>
</div>
</div>
</body></html>
